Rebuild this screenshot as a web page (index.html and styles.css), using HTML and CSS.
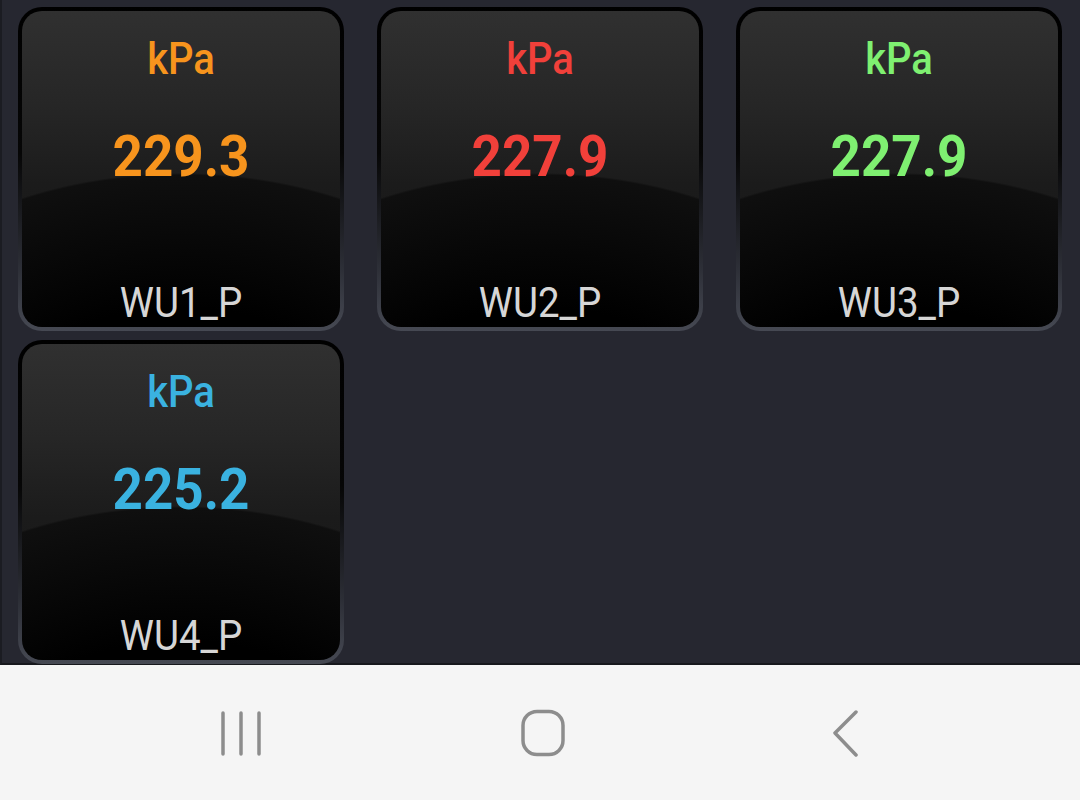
FILE: index.html
```html
<!DOCTYPE html>
<html lang="en">
<head>
<meta charset="utf-8">
<title>Pressure</title>
<link rel="stylesheet" href="styles.css">
</head>
<body>
<div class="screen">
  <main class="dash">
    <div class="tile">
      <div class="face">
        <span class="unit orange">kPa</span>
        <span class="value orange">229.3</span>
        <span class="name">WU1_P</span>
      </div>
    </div>
    <div class="tile">
      <div class="face">
        <span class="unit red">kPa</span>
        <span class="value red">227.9</span>
        <span class="name">WU2_P</span>
      </div>
    </div>
    <div class="tile">
      <div class="face">
        <span class="unit green">kPa</span>
        <span class="value green">227.9</span>
        <span class="name">WU3_P</span>
      </div>
    </div>
    <div class="tile">
      <div class="face">
        <span class="unit blue">kPa</span>
        <span class="value blue">225.2</span>
        <span class="name">WU4_P</span>
      </div>
    </div>
  </main>
  <nav class="navbar">
    <div class="navbtn">
      <svg width="44" height="48" viewBox="0 0 44 48" fill="none" stroke="#8d8d8d" stroke-width="3.5" stroke-linecap="round">
        <line x1="4" y1="4" x2="4" y2="45"/>
        <line x1="22" y1="4" x2="22" y2="45"/>
        <line x1="40" y1="4" x2="40" y2="45"/>
      </svg>
    </div>
    <div class="navbtn">
      <svg width="48" height="48" viewBox="0 0 48 48" fill="none" stroke="#8d8d8d" stroke-width="3.5">
        <rect x="4" y="2.5" width="40" height="43" rx="14" ry="14"/>
      </svg>
    </div>
    <div class="navbtn">
      <svg width="30" height="48" viewBox="0 0 30 48" fill="none" stroke="#8d8d8d" stroke-width="3.5" stroke-linecap="round" stroke-linejoin="round">
        <path d="M26 3 L5 24 L26 46"/>
      </svg>
    </div>
  </nav>
</div>
</body>
</html>
```
FILE: styles.css
```css
* { box-sizing: border-box; }
html, body { margin: 0; padding: 0; }
body {
  width: 1080px;
  height: 800px;
  overflow: hidden;
  font-family: Roboto, "Liberation Sans", sans-serif;
  background: #f5f5f5;
}
.screen {
  display: flex;
  flex-direction: column;
  height: 800px;
}
.dash {
  height: 665px;
  background: #262730;
  border-left: 2px solid #1b1c22;
  border-bottom: 2px solid #17181d;
  padding: 7px 0 0 16px;
  display: grid;
  grid-template-columns: repeat(3, 326px);
  grid-template-rows: 324px 324px;
  column-gap: 33px;
  row-gap: 9px;
  align-content: start;
}
.tile {
  border-radius: 24px;
  padding: 4px;
  background: linear-gradient(to bottom, #000 0%, #060606 45%, #2c2e36 80%, #464953 100%);
}
.face {
  height: 100%;
  border-radius: 20px;
  display: flex;
  flex-direction: column;
  align-items: center;
  overflow: hidden;
  background:
    radial-gradient(ellipse 400px 300px at 50% 462px, #000 55%, #0f0f0f 99.3%, rgba(0,0,0,0) 100%),
    linear-gradient(to bottom, #303030 0%, #262626 30%, #1b1b1b 55%, #161616 100%);
}
.unit, .value, .name {
  display: block;
  line-height: 1;
  transform: scaleY(1.1);
  white-space: nowrap;
}
.unit {
  font-size: 40px;
  font-weight: 500;
  margin-top: 29px;
}
.value {
  font-size: 53px;
  font-weight: 700;
  margin-top: 50px;
}
.name {
  font-size: 38.5px;
  font-weight: 400;
  color: #d6d6d6;
  margin-top: auto;
  margin-bottom: 5px;
}
.orange { color: #f7941d; }
.red { color: #f1403a; }
.green { color: #7ff071; }
.blue { color: #3ab2e0; }
.navbar {
  flex: 1;
  background: #f5f5f5;
  display: grid;
  grid-template-columns: repeat(3, 302px);
  padding-left: 90px;
  align-items: center;
}
.navbtn {
  display: flex;
  justify-content: center;
  align-items: center;
  height: 100%;
}
.navbtn svg { display: block; }
```
